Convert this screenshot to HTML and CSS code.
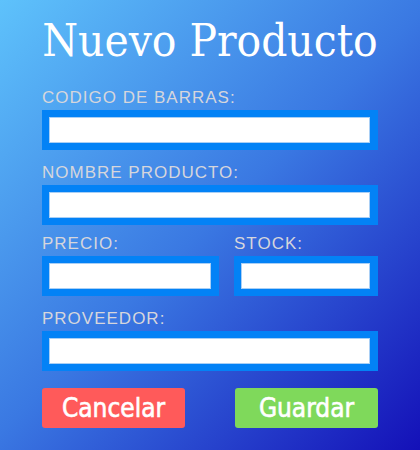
FILE: index.html
```html
<!DOCTYPE html>
<html lang="es">
<head>
<meta charset="utf-8">
<title>Nuevo Producto</title>
<link rel="stylesheet" href="styles.css">
</head>
<body>
<div class="page">
  <h1 class="title">Nuevo Producto</h1>
  <div class="field f1">
    <label class="label">CODIGO DE BARRAS:</label>
    <div class="box"><input class="input" type="text"></div>
  </div>
  <div class="field f2">
    <label class="label">NOMBRE PRODUCTO:</label>
    <div class="box"><input class="input" type="text"></div>
  </div>
  <div class="row f3">
    <div class="field col-left">
      <label class="label">PRECIO:</label>
      <div class="box"><input class="input" type="text"></div>
    </div>
    <div class="field col-right">
      <label class="label">STOCK:</label>
      <div class="box"><input class="input" type="text"></div>
    </div>
  </div>
  <div class="field f4">
    <label class="label">PROVEEDOR:</label>
    <div class="box"><input class="input" type="text"></div>
  </div>
  <div class="buttons">
    <button class="btn btn-cancel">Cancelar</button>
    <button class="btn btn-save">Guardar</button>
  </div>
</div>
</body>
</html>
```
FILE: styles.css
```css
html, body {
  margin: 0;
  padding: 0;
}
body {
  width: 420px;
  height: 450px;
  overflow: hidden;
  background: linear-gradient(135deg, #5ec2fb 0%, #3a78e2 50%, #1410b8 100%);
}
.page {
  padding: 0 42px;
  display: flex;
  flex-direction: column;
}
.title {
  margin: 15px -20px 0;
  font-family: "DejaVu Serif Condensed", "DejaVu Serif", serif;
  font-stretch: condensed;
  font-weight: normal;
  font-size: 45.5px;
  line-height: 51px;
  white-space: nowrap;
  color: #ffffff;
  text-align: center;
}
.field {
  display: flex;
  flex-direction: column;
}
.label {
  font-family: "Liberation Sans", Arial, sans-serif;
  font-size: 17px;
  letter-spacing: 1px;
  line-height: 20px;
  color: #d6d6dc;
  margin-bottom: 2px;
}
.f1 { margin-top: 22px; }
.f2 { margin-top: 13px; }
.f3 { margin-top: 9px; }
.f4 { margin-top: 13px; }
.row {
  display: flex;
  justify-content: space-between;
}
.col-left { width: 177px; }
.col-right { width: 144px; }
.box {
  height: 40px;
  box-sizing: border-box;
  background: #0382f6;
  padding: 7px 8px 7px 7px;
}
.input {
  display: block;
  width: 100%;
  height: 26px;
  box-sizing: border-box;
  margin: 0;
  border: 1px solid #a9cff5;
  background: #ffffff;
  outline: none;
  padding: 0 4px;
}
.buttons {
  display: flex;
  justify-content: space-between;
  margin-top: 17px;
}
.btn {
  width: 143px;
  height: 40px;
  border: none;
  border-radius: 3px;
  color: #ffffff;
  font-family: "DejaVu Sans Condensed", "DejaVu Sans", sans-serif;
  font-stretch: condensed;
  font-weight: normal;
  font-size: 26px;
  -webkit-text-stroke: 0.6px #ffffff;
  padding: 0;
  cursor: pointer;
}
.btn-cancel { background: #ff5a5a; }
.btn-save { background: #7fd95b; }
```
